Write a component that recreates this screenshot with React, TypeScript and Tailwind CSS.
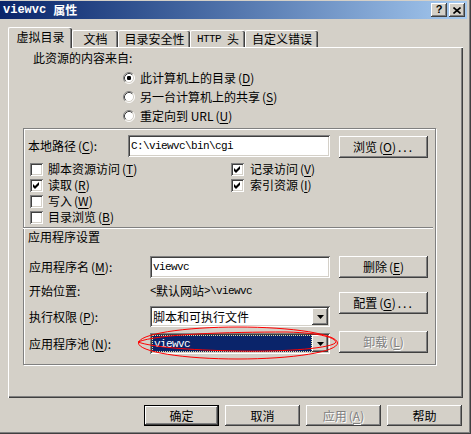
const raised =
  "shadow-[inset_-1px_-1px_0_#404040,inset_1px_1px_0_#ffffff,inset_-2px_-2px_0_#808080]";
const sunken =
  "shadow-[inset_1px_1px_0_#808080,inset_-1px_-1px_0_#ffffff,inset_2px_2px_0_#404040,inset_-2px_-2px_0_#d4d0c8]";
const mono = "font-['Liberation_Mono',monospace] text-[11px] tracking-[-0.6px]";

function Key({ k }: { k: string }) {
  return (
    <span className="ml-[2px]">
      (<span className="underline underline-offset-[2px]">{k}</span>)
    </span>
  );
}

function Check({ on }: { on?: boolean }) {
  return (
    <span className={`w-[13px] h-[13px] shrink-0 bg-white ${sunken}`}>
      {on && (
        <svg width="13" height="13" viewBox="0 0 13 13">
          <polygon points="3,5 5,7 9,3 9,6 5,10 3,8" fill="#000" />
        </svg>
      )}
    </span>
  );
}

function Radio({ on }: { on?: boolean }) {
  return (
    <svg width="12" height="12" viewBox="0 0 12 12" className="shrink-0">
      <circle cx="6" cy="6" r="5" fill="#fff" />
      <path d="M2.11 9.89 A5.5 5.5 0 0 1 9.89 2.11" fill="none" stroke="#808080" />
      <path d="M9.89 2.11 A5.5 5.5 0 0 1 2.11 9.89" fill="none" stroke="#fff" />
      <path d="M2.82 9.18 A4.5 4.5 0 0 1 9.18 2.82" fill="none" stroke="#404040" />
      <path d="M9.18 2.82 A4.5 4.5 0 0 1 2.82 9.18" fill="none" stroke="#d4d0c8" />
      {on && <rect x="4" y="4" width="4" height="4" rx="1.2" fill="#000" />}
    </svg>
  );
}

function Arrow() {
  return (
    <svg width="7" height="4" viewBox="0 0 7 4">
      <polygon points="0,0 7,0 3.5,4" fill="#000" />
    </svg>
  );
}

function Combo({ children, sel }: { children: React.ReactNode; sel?: boolean }) {
  return (
    <div className={`w-[180px] h-[21px] bg-white ${sunken} flex p-[2px]`}>
      {sel ? (
        <div className="flex-1 min-w-0 flex items-center bg-[#0a246a] text-white border border-dotted border-[#e8dfa0] pl-[1px]">
          {children}
        </div>
      ) : (
        <div className="flex-1 min-w-0 flex items-center pl-[1px]">{children}</div>
      )}
      <div className={`w-[16px] shrink-0 bg-[#d4d0c8] ${raised} flex items-center justify-center`}>
        <Arrow />
      </div>
    </div>
  );
}

function Btn({
  children,
  disabled,
  className = "",
}: {
  children: React.ReactNode;
  disabled?: boolean;
  className?: string;
}) {
  return (
    <div
      className={`w-[89px] h-[22px] bg-[#d4d0c8] ${raised} flex items-center justify-center ${
        disabled ? "text-[#808080] [text-shadow:1px_1px_0_#ffffff]" : ""
      } ${className}`}
    >
      {children}
    </div>
  );
}

export default function App() {
  return (
    <div className="w-[471px] h-[434px] bg-[#d4d0c8] overflow-hidden text-black text-[12px] leading-[14px] font-['Noto_Sans_CJK_SC','Noto_Sans',sans-serif] shadow-[inset_-1px_-1px_0_#404040,inset_-2px_-2px_0_#808080]">
      {/* title bar */}
      <div className="mt-[1px] w-[467px] h-[18px] bg-linear-to-r from-[#0a246a] to-[#a6caf0] flex items-center pl-[3px]">
        <span className="font-['Liberation_Mono',monospace] font-bold text-[12px] text-white">viewvc</span>
        <span className="ml-[7px] font-bold text-white">属性</span>
        <div className="ml-auto flex gap-[2px] mr-[2px]">
          <div className={`w-[16px] h-[14px] bg-[#d4d0c8] ${raised} flex items-center justify-center font-['Liberation_Sans',sans-serif] font-bold text-[11px] leading-none pb-[1px]`}>
            ?
          </div>
          <div className={`w-[16px] h-[14px] bg-[#d4d0c8] ${raised} flex items-center justify-center`}>
            <svg width="8" height="7" viewBox="0 0 8 7">
              <path d="M0.5 0.5 L7.5 6.5 M7.5 0.5 L0.5 6.5" stroke="#000" strokeWidth="1.6" />
            </svg>
          </div>
        </div>
      </div>

      {/* tabs */}
      <div className="relative z-10 mt-[8px] ml-[8px] h-[20px] flex items-end">
        <div className="w-[64px] h-[21px] -mb-[1px] bg-[#d4d0c8] border-t border-l border-white rounded-t-[2px] shadow-[inset_-1px_0_0_#404040,inset_-2px_0_0_#808080] flex items-center justify-center pb-[2px]">
          虚拟目录
        </div>
        {[
          ["文档", "w-[46px]"],
          ["目录安全性", "w-[72px]"],
          ["HTTP 头", "w-[55px]"],
          ["自定义错误", "w-[73px]"],
        ].map(([t, w]) => (
          <div
            key={t}
            className={`${w} h-[17px] bg-[#d4d0c8] border-t border-l border-white rounded-t-[2px] shadow-[inset_-1px_0_0_#404040,inset_-2px_0_0_#808080] flex items-center justify-center`}
          >
            {t === "HTTP 头" ? (
              <>
                <span className={mono}>HTTP</span>
                <span className="ml-[6px]">头</span>
              </>
            ) : (
              t
            )}
          </div>
        ))}
      </div>

      {/* panel */}
      <div className="ml-[8px] w-[455px] h-[351px] border-t border-l border-white shadow-[inset_-1px_-1px_0_#404040,inset_-2px_-2px_0_#808080] flex flex-col">
        <div className="ml-[24px] mt-[3px] h-[14px]">此资源的内容来自:</div>
        <div className="mt-[3px] ml-[114px] flex flex-col">
          <div className="h-[19px] flex items-center gap-[5px]">
            <Radio on />
            <span>
              此计算机上的目录<Key k="D" />
            </span>
          </div>
          <div className="h-[19px] flex items-center gap-[5px]">
            <Radio />
            <span>
              另一台计算机上的共享<Key k="S" />
            </span>
          </div>
          <div className="h-[19px] flex items-center gap-[5px]">
            <Radio />
            <span>
              重定向到 URL<Key k="U" />
            </span>
          </div>
        </div>

        {/* group box */}
        <div className="ml-[14px] mt-[3px] w-[413px] h-[237px] border border-[#808080] shadow-[inset_1px_1px_0_#ffffff,1px_1px_0_#ffffff] flex flex-col">
          <div className="mt-[6px] pl-[4px] flex items-start">
            <div className="w-[100px] h-[22px] flex items-center">
              本地路径<Key k="C" />:
            </div>
            <div className={`w-[202px] h-[22px] bg-white ${sunken} flex items-center pl-[3px] ${mono}`}>
              C:\viewvc\bin\cgi
            </div>
            <Btn className="ml-[9px] mt-[1px]">
              浏览<Key k="O" />
              <span className="tracking-[2px] ml-[2px]">...</span>
            </Btn>
          </div>

          <div className="mt-[3px] pl-[6px] flex">
            <div className="w-[201px] flex flex-col">
              {[
                ["脚本资源访问", "T", false],
                ["读取", "R", true],
                ["写入", "W", false],
                ["目录浏览", "B", false],
              ].map(([t, k, on]) => (
                <div key={t as string} className="h-[16px] flex items-center gap-[5px]">
                  <Check on={on as boolean} />
                  <span>
                    {t}
                    <Key k={k as string} />
                  </span>
                </div>
              ))}
            </div>
            <div className="flex flex-col">
              {[
                ["记录访问", "V"],
                ["索引资源", "I"],
              ].map(([t, k]) => (
                <div key={t} className="h-[16px] flex items-center gap-[6px]">
                  <Check on />
                  <span>
                    {t}
                    <Key k={k} />
                  </span>
                </div>
              ))}
            </div>
          </div>

          <div className="mt-[2px] -ml-[1px] w-[410px] h-[2px] border-t border-[#808080] border-b border-b-white" />
          <div className="mt-[1px] pl-[4px] h-[14px]">应用程序设置</div>

          <div className="mt-[12px] pl-[5px] flex">
            <div className="w-[301px] flex flex-col">
              <div className="h-[22px] flex items-center">
                <div className="w-[121px]">
                  应用程序名<Key k="M" />:
                </div>
                <div className={`w-[180px] h-[22px] bg-white ${sunken} flex items-center pl-[3px] ${mono}`}>
                  viewvc
                </div>
              </div>
              <div className="mt-[6px] h-[14px] flex items-center">
                <div className="w-[121px]">开始位置:</div>
                <span className={mono}>&lt;</span>
                <span>默认网站</span>
                <span className={mono}>&gt;\viewvc</span>
              </div>
              <div className="mt-[8px] h-[21px] flex items-center">
                <div className="w-[121px]">
                  执行权限<Key k="P" />:
                </div>
                <Combo>脚本和可执行文件</Combo>
              </div>
              <div className="mt-[6px] h-[21px] flex items-center">
                <div className="w-[121px]">
                  应用程序池<Key k="N" />:
                </div>
                <div className="relative">
                  <Combo sel>
                    <span className={mono}>viewvc</span>
                  </Combo>
                  <svg
                    className="absolute left-[-13px] top-[-7px] pointer-events-none"
                    width="202"
                    height="35"
                    viewBox="0 0 202 35"
                  >
                    <ellipse cx="101" cy="17" rx="99.5" ry="16" fill="none" stroke="#ff0000" />
                    <path
                      d="M1 16 C 20 8, 90 6, 150 6 C 185 7, 198 12, 199 16 C 197 22, 150 26, 100 25 C 50 24, 15 21, 1 16 Z"
                      fill="none"
                      stroke="#ff0000"
                    />
                  </svg>
                </div>
              </div>
            </div>
            <div className="ml-[9px] flex flex-col">
              <Btn>
                删除<Key k="E" />
              </Btn>
              <Btn className="mt-[14px]">
                配置<Key k="G" />
                <span className="tracking-[2px] ml-[2px]">...</span>
              </Btn>
              <Btn className="mt-[17px]" disabled>
                卸载<Key k="L" />
              </Btn>
            </div>
          </div>
        </div>
      </div>

      {/* bottom buttons */}
      <div className="mt-[7px] ml-[144px] flex gap-[6px]">
        <div className="w-[75px] h-[21px] border border-black bg-[#d4d0c8] shadow-[inset_-1px_-1px_0_#404040,inset_1px_1px_0_#ffffff,inset_-2px_-2px_0_#808080] flex items-center justify-center">
          确定
        </div>
        <div className={`w-[75px] h-[21px] bg-[#d4d0c8] ${raised} flex items-center justify-center`}>取消</div>
        <div
          className={`w-[75px] h-[21px] bg-[#d4d0c8] ${raised} flex items-center justify-center text-[#808080] [text-shadow:1px_1px_0_#ffffff]`}
        >
          应用<Key k="A" />
        </div>
        <div className={`w-[75px] h-[21px] bg-[#d4d0c8] ${raised} flex items-center justify-center`}>帮助</div>
      </div>
    </div>
  );
}
